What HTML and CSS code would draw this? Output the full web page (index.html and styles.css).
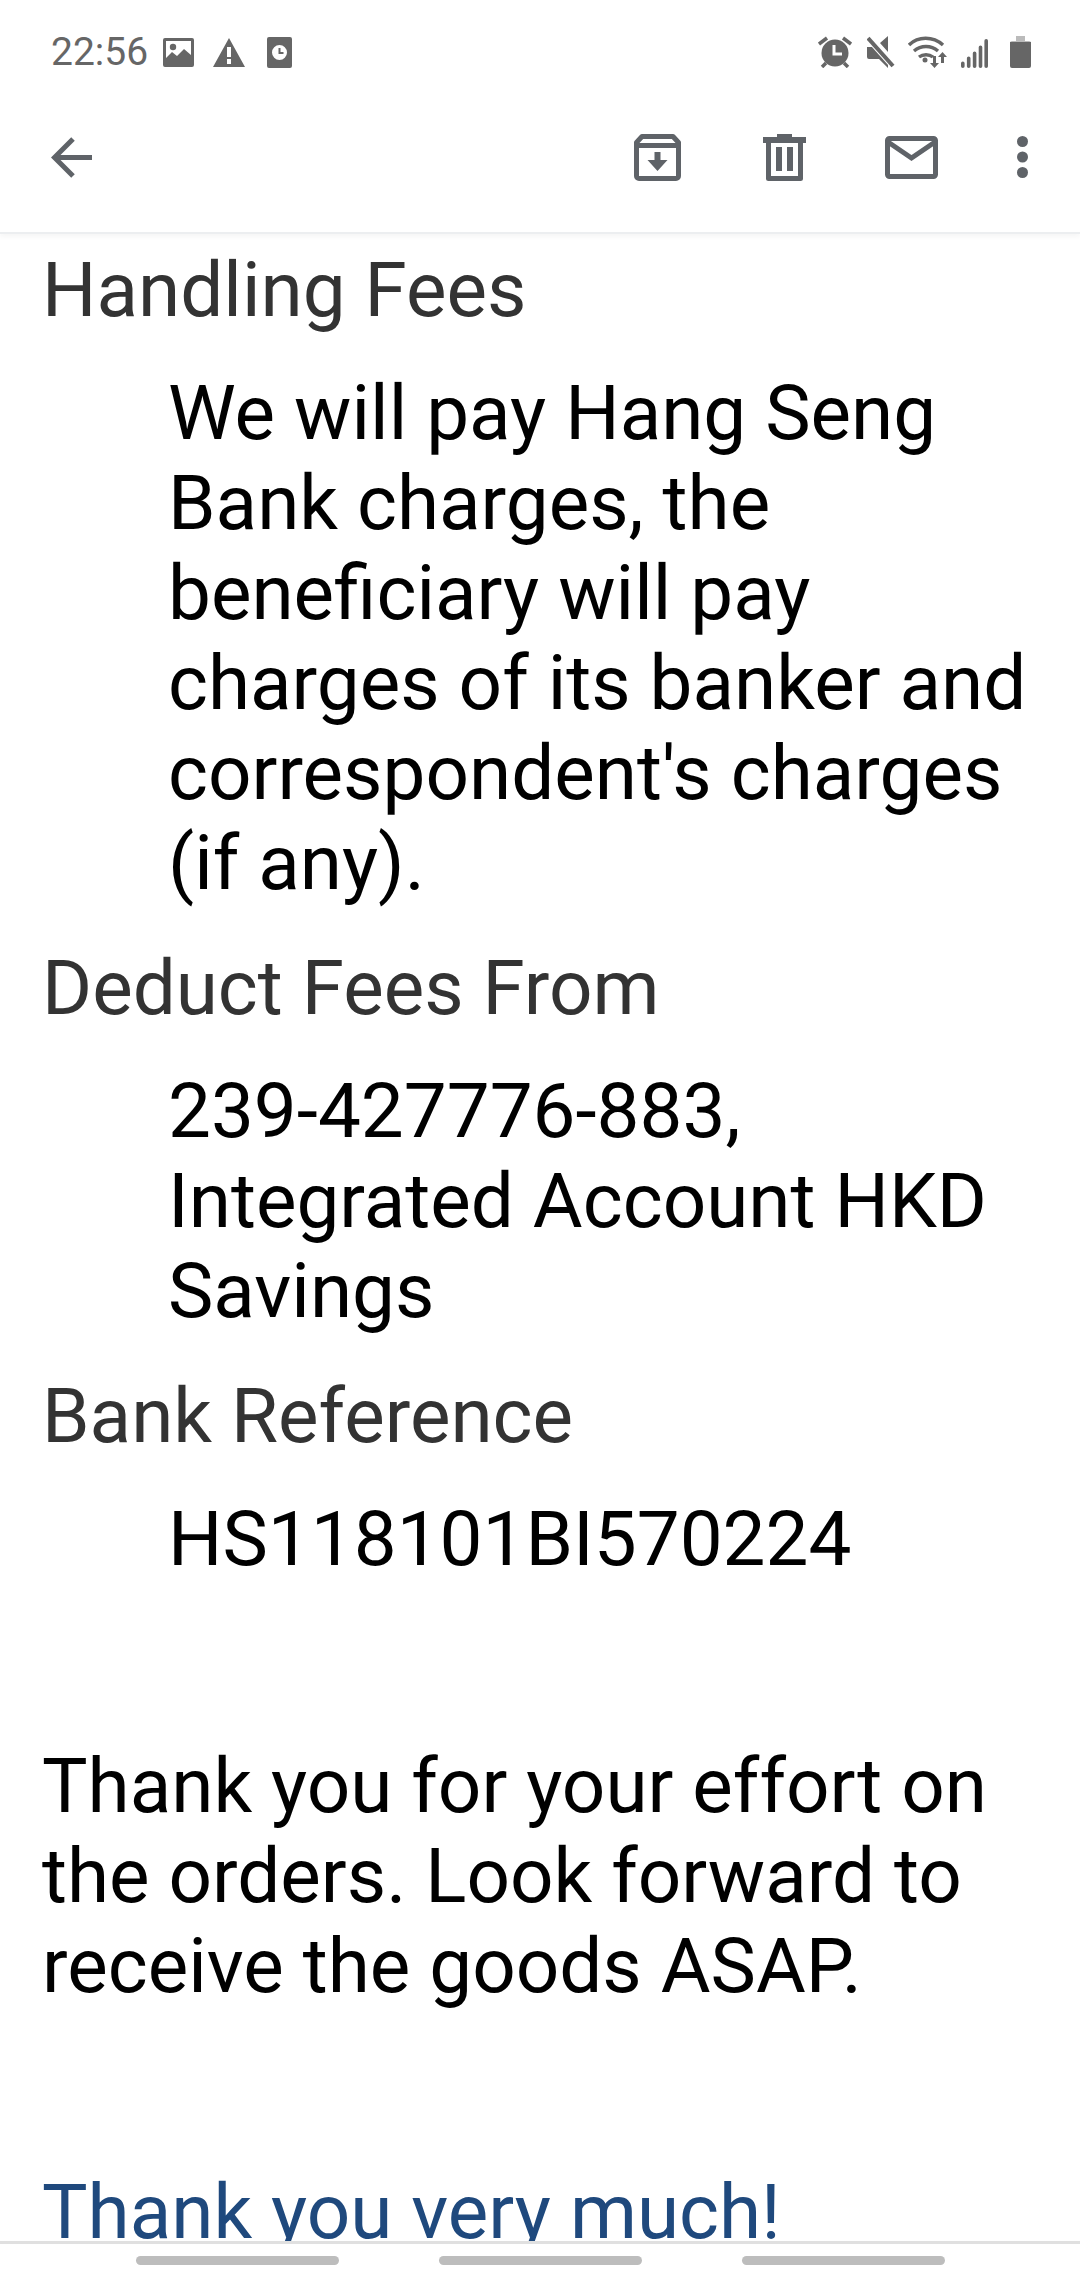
FILE: index.html
```html
<!DOCTYPE html>
<html lang="en">
<head>
    <meta charset="UTF-8">
    <meta name="viewport" content="width=device-width, initial-scale=1.0">
    <title>Email message</title>
    <link rel="stylesheet" href="styles.css">
</head>
<body>
    <div class="phone">
        <div class="status-bar">
            <div class="status-left">
                <span class="clock">22:56</span>
                <svg class="st-image" width="31" height="29" viewBox="0 0 31 29"><path fill="#666" fill-rule="evenodd" d="M2 0h27a2 2 0 0 1 2 2v25a2 2 0 0 1-2 2H2a2 2 0 0 1-2-2V2a2 2 0 0 1 2-2zM3 3v17l6-6 5 4 7-7 7 6V3z"/><circle cx="10" cy="9" r="3.200" fill="#666"/></svg>
                <svg class="st-warn" width="32" height="29" viewBox="0 0 32 29"><path fill="#666" fill-rule="evenodd" d="M16 0l16 29H0zM14 9v10h4V9zM14 21v5h4v-5z"/></svg>
                <svg class="st-clock" width="25" height="31" viewBox="0 0 25 31"><path fill="#666" fill-rule="evenodd" d="M2 0h21a2 2 0 0 1 2 2v27a2 2 0 0 1-2 2H2a2 2 0 0 1-2-2V2a2 2 0 0 1 2-2zM12.500 8a7.500 7.500 0 1 0 0 15 7.500 7.500 0 0 0 0-15z"/><path d="M12.500 11v5h4" fill="none" stroke="#666" stroke-width="2"/></svg>
            </div>
            <div class="status-right">
                <svg class="st-alarm" width="34" height="32" viewBox="0 0 34 32"><circle cx="17" cy="17" r="13.500" fill="#666"/><path d="M16 9v9h8" fill="none" stroke="#fff" stroke-width="3"/><path d="M1 8l8-6M33 8l-8-6M4 31l4-4M30 31l-4-4" stroke="#666" stroke-width="3.500"/></svg>
                <svg class="st-mute" width="28" height="32" viewBox="0 0 28 32"><path fill="#666" d="M0 11h6l2-2 13 15v8l-9-9H2a2 2 0 0 1-2-2zM13 7l8-7v16z"/><path d="M1 2l25 28" stroke="#fff" stroke-width="6"/><path d="M1 2l25 28" stroke="#666" stroke-width="4"/></svg>
                <svg class="st-wifi" width="41" height="32" viewBox="0 0 41 32"><g fill="none" stroke="#666" stroke-width="3.400"><path d="M1 9c9-9 24-9 34 0"/><path d="M6 15c7-6 17-6 24 0"/><path d="M11 21c4-3 10-3 14 0"/></g><circle cx="17" cy="24" r="2.500" fill="#666"/><path d="M25 20h3v7h3l-4.500 5-4.500-5h3zM36 27h-3v-6h-3l4.500-5 4.500 5h-3z" fill="#666"/></svg>
                <svg class="st-signal" width="27" height="29" viewBox="0 0 27 29"><path d="M1.800 27.200v-3M7.700 27.200v-8M13.600 27.200v-13M19.500 27.200v-19M25.200 27.200V1.800" stroke="#666" stroke-width="3.600" stroke-linecap="round" fill="none"/></svg>
                <svg class="st-batt" width="21" height="32" viewBox="0 0 21 32"><rect x="6" y="0" width="9" height="5" fill="#bbb"/><path fill="#bbb" d="M2 5h17a2 2 0 0 1 2 2v2H0V7a2 2 0 0 1 2-2z"/><path fill="#666" d="M0 6h21v24a2 2 0 0 1-2 2H2a2 2 0 0 1-2-2z"/></svg>
            </div>
        </div>

        <div class="toolbar">
            <button class="tool-btn back-btn" type="button" aria-label="Back">
                <svg width="41" height="41" viewBox="0 0 41 41"><path d="M41 20.500H4M22 2L3.500 20.500 22 39" fill="none" stroke="#5f6368" stroke-width="5"/></svg>
            </button>
            <div class="tool-actions">
                <svg class="act-archive" width="47" height="47" viewBox="0 0 47 47"><path fill="none" stroke="#5f6368" stroke-width="5" stroke-linejoin="round" d="M8 2.500h31l5.500 6V42a2.500 2.500 0 0 1-2.500 2.500H5A2.500 2.500 0 0 1 2.500 42V8.500zM3 11.500h41"/><path fill="#5f6368" d="M20.500 18h6v8h7l-10 11-10-11h7z"/></svg>
                <svg class="act-trash" width="43" height="47" viewBox="0 0 43 47"><path fill="#5f6368" d="M14 0h15v3h14v6H0V3h14z"/><path fill="none" stroke="#5f6368" stroke-width="5" stroke-linejoin="round" d="M5.500 8v36.500h32V8"/><path fill="#5f6368" d="M13 13h6v24h-6zM24 13h6v24h-6z"/></svg>
                <svg class="act-mail" width="53" height="43" viewBox="0 0 53 43"><rect x="2.500" y="2.500" width="48" height="38" rx="2" fill="none" stroke="#5f6368" stroke-width="5"/><path d="M3 6l23.500 16L50 6" fill="none" stroke="#5f6368" stroke-width="5"/></svg>
                <svg class="act-more" width="11" height="42" viewBox="0 0 11 42"><circle cx="5.500" cy="5.500" r="5.500" fill="#5f6368"/><circle cx="5.500" cy="21" r="5.500" fill="#5f6368"/><circle cx="5.500" cy="36.500" r="5.500" fill="#5f6368"/></svg>
            </div>
        </div>

        <div class="content">
            <div class="mail-body">
                <dl class="details">
                    <dt>Handling Fees</dt>
                    <dd>We will pay Hang Seng Bank charges, the beneficiary will pay charges of its banker and correspondent's charges (if any).</dd>
                    <dt>Deduct Fees From</dt>
                    <dd>239-427776-883, Integrated Account HKD Savings</dd>
                    <dt>Bank Reference</dt>
                    <dd>HS118101BI570224</dd>
                </dl>
                <p class="note">Thank you for your effort on the orders. Look forward to receive the goods ASAP.</p>
                <p class="signoff">Thank you very much!</p>
            </div>
        </div>

        <div class="nav-bar">
            <span class="nav-pill"></span>
            <span class="nav-pill"></span>
            <span class="nav-pill"></span>
        </div>
    </div>
</body>
</html>
```

FILE: styles.css
```css
html, body {
    margin: 0;
    padding: 0;
    background: #fff;
}
.phone {
    width: 1080px;
    height: 2280px;
    display: flex;
    flex-direction: column;
    overflow: hidden;
    font-family: Roboto, sans-serif;
    background: #fff;
}
.status-bar {
    height: 84px;
    flex: none;
    display: flex;
    justify-content: space-between;
    align-items: center;
    padding: 20px 49px 0 51px;
    box-sizing: border-box;
}
.status-left, .status-right {
    display: flex;
    align-items: center;
}
.clock {
    font-size: 39px;
    color: #666;
    margin-right: 15px;
}
.st-warn { margin-left: 19px; }
.st-clock { margin-left: 22px; }
.st-mute { margin-left: 15px; }
.st-wifi { margin-left: 13px; }
.st-signal { margin-left: 12px; margin-top: 3px; }
.st-batt { margin-left: 22px; }
.toolbar {
    height: 150px;
    flex: none;
    display: flex;
    justify-content: space-between;
    align-items: center;
    padding: 0 52px 2px 51px;
    box-sizing: border-box;
    border-bottom: 2px solid #eceef0;
    box-shadow: 0 3px 5px rgba(0,0,0,0.04);
    position: relative;
}
.tool-btn {
    background: none;
    border: none;
    padding: 0;
    display: flex;
}
.tool-actions {
    display: flex;
    align-items: center;
}
.act-trash { margin-left: 82px; }
.act-mail { margin-left: 79px; }
.act-more { margin-left: 79px; }
.content {
    flex: 1;
    min-height: 0;
    overflow: hidden;
}
.mail-body {
    padding: 11px 20px 0 42px;
    font-size: 76.400px;
    line-height: 90px;
    color: #000;
}
.details {
    margin: 0;
}
.details dt {
    color: #333;
}
.details dd {
    margin: 33px 0 35px 126px;
}
.note {
    margin: 157px 0 0;
}
.signoff {
    margin: 156px 0 0;
    color: #1f497d;
}
.nav-bar {
    height: 39px;
    flex: none;
    display: flex;
    justify-content: center;
    gap: 100px;
    padding-top: 12px;
    border-top: 3px solid #e0e0e0;
    box-sizing: border-box;
}
.nav-pill {
    width: 203px;
    height: 9px;
    border-radius: 5px;
    background: #bdbdbd;
}
```
